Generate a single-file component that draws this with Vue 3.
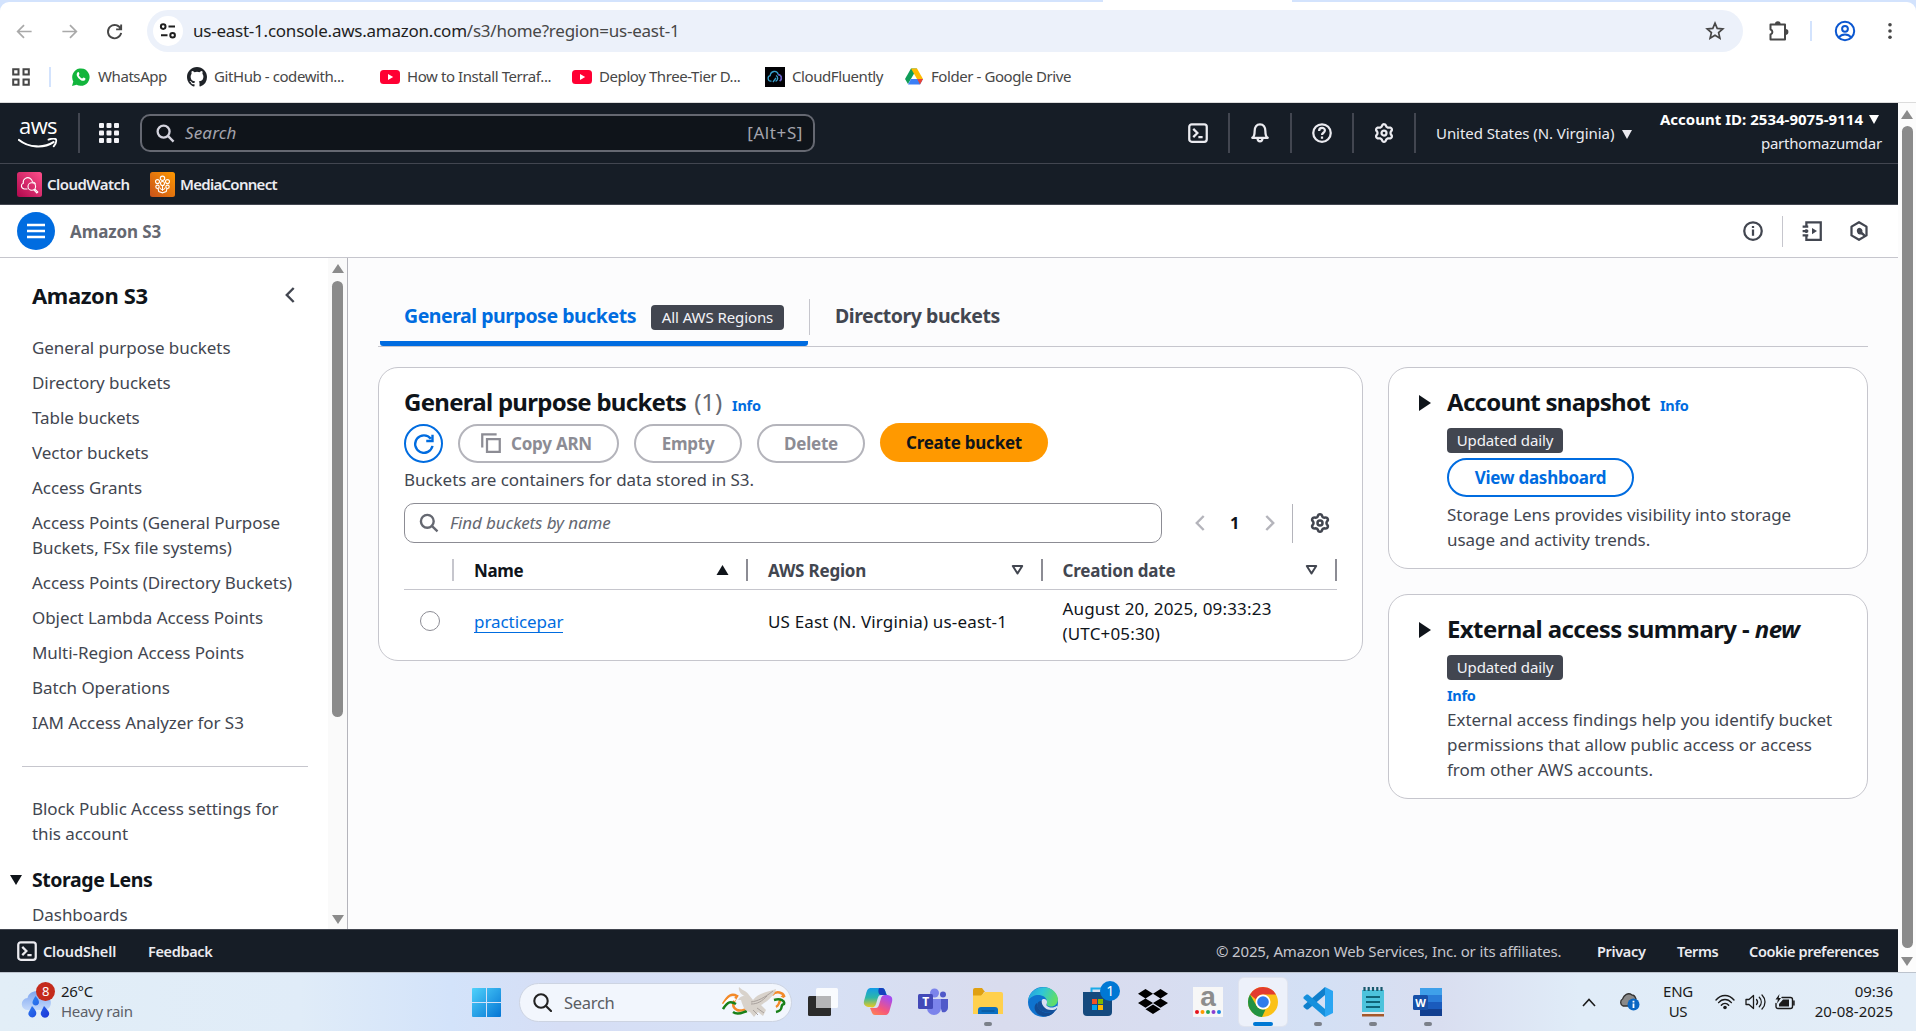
<script setup>
const bookmarks = [
  { kind: 'whatsapp', label: 'WhatsApp', width: 116 },
  { kind: 'github', label: 'GitHub - codewith...', width: 193 },
  { kind: 'youtube', label: 'How to Install Terraf...', width: 192 },
  { kind: 'youtube', label: 'Deploy Three-Tier D...', width: 193 },
  { kind: 'fluently', label: 'CloudFluently', width: 139 },
  { kind: 'drive', label: 'Folder - Google Drive', width: 180 }
]

const navLinks = [
  'General purpose buckets',
  'Directory buckets',
  'Table buckets',
  'Vector buckets',
  'Access Grants',
  ['Access Points (General Purpose', 'Buckets, FSx file systems)'],
  'Access Points (Directory Buckets)',
  'Object Lambda Access Points',
  'Multi-Region Access Points',
  'Batch Operations',
  'IAM Access Analyzer for S3'
].map((l) => [].concat(l))

// Six-lobed gear outline on a 16-unit grid
function gearPath() {
  const pts = []
  for (let i = 0; i < 72; i++) {
    const a = (i / 72) * Math.PI * 2 - Math.PI / 2
    const c = Math.cos(6 * (a + Math.PI / 2))
    const r = 6.1 + 0.9 * Math.sign(c) * Math.pow(Math.abs(c), 0.6)
    pts.push((8 + r * Math.cos(a)).toFixed(2) + ' ' + (8 + r * Math.sin(a)).toFixed(2))
  }
  return 'M' + pts.join('L') + 'Z'
}
const gear = gearPath()
</script>

<template>
  <div class="screen">
    <!-- Browser chrome -->
    <header class="browser">
      <div class="tabstrip"><span class="open-tab"></span></div>
      <div class="toolbar">
        <svg class="nav back" viewBox="0 0 20 20"><path d="M17.5 10H3M9.5 3.2L2.8 10l6.7 6.8" /></svg>
        <svg class="nav fwd" viewBox="0 0 20 20"><path d="M2.5 10H17M10.5 3.2l6.7 6.8-6.7 6.8" /></svg>
        <svg class="nav reload" viewBox="0 0 20 20"><path d="M16.6 7.5A7 7 0 1 0 17 11.5M17 2.5v5.3h-5.3" /></svg>
        <div class="omnibox">
          <span class="site">
            <svg viewBox="0 0 18 18" width="18" height="18"><g fill="none" stroke="#1f1f1f" stroke-width="2"><circle cx="4.2" cy="4.6" r="2.3" /><path d="M9.5 4.6H16M2 13.2h6.5" /><circle cx="13.6" cy="13.2" r="2.3" /></g></svg>
          </span>
          <span class="url">us-east-1.console.aws.amazon.com<i>/s3/home?region=us-east-1</i></span>
          <svg class="star" viewBox="0 0 20 20"><path d="M10 2.2l2.2 5.2 5.6.5-4.2 3.7 1.3 5.6-4.9-3-4.9 3 1.3-5.6-4.2-3.7 5.6-.5z" /></svg>
        </div>
        <svg class="puzzle" viewBox="0 0 22 22"><path d="M2.500 4.500H17v15H2.500v-5a2.600 2.600 0 0 0 0-5z" fill="none" stroke="#474747" stroke-width="2" stroke-linejoin="round" /><path d="M7 4a2.800 2.800 0 0 1 5.600 0zM17.600 9.100a2.800 2.800 0 0 1 0 5.600z" fill="#474747" /></svg>
        <span class="tsep"></span>
        <svg class="person" viewBox="0 0 22 22"><g fill="none" stroke="#0b57d0" stroke-width="2"><circle cx="11" cy="11" r="9.2" /><circle cx="11" cy="8.8" r="2.9" /><path d="M4.8 17.4c3-4 9.400-4 12.400 0" /></g></svg>
        <svg class="dots" viewBox="0 0 6 20"><circle cx="3" cy="3" r="2" /><circle cx="3" cy="10" r="2" /><circle cx="3" cy="17" r="2" /></svg>
      </div>
      <div class="bookmarks">
        <svg class="apps" viewBox="0 0 18 18"><path d="M1.200 1.200h5.300v5.300H1.200zM11.500 1.200h5.300v5.300h-5.300zM1.200 11.500h5.300v5.300H1.200zM11.500 11.500h5.300v5.300h-5.300z" fill="none" stroke="#474747" stroke-width="2" /></svg>
        <span class="bsep"></span>
        <div v-for="b in bookmarks" :key="b.label" class="bm" :style="{ width: b.width + 'px' }">
          <svg v-if="b.kind === 'whatsapp'" viewBox="0 0 20 20"><path d="M1 19l1.300-4.600A8.700 8.700 0 1 1 5.600 17.700z" fill="#12b53c" /><path d="M6.500 5.500c.8-.8 1.500-.3 1.900 1.300.2.800-.9 1.100-.5 1.800a7 7 0 0 0 3 2.900c.8.300 1.100-1.100 1.800-.9 1.800.7 2.200 1.100 1.500 2.100-1 1.500-2.700 1.400-4.300.6A9 9 0 0 1 6 9C5.500 7.500 5.700 6.300 6.500 5.500z" fill="#fff" /></svg>
          <svg v-else-if="b.kind === 'github'" viewBox="0 0 16 16"><path fill="#1f2328" d="M8 0C3.580 0 0 3.580 0 8c0 3.540 2.290 6.530 5.470 7.590.4.070.55-.17.55-.38 0-.19-.01-.82-.01-1.490-2.010.37-2.530-.49-2.690-.94-.09-.23-.48-.94-.82-1.130-.28-.15-.68-.52-.01-.53.63-.01 1.080.58 1.230.82.72 1.210 1.870.87 2.330.66.07-.52.28-.87.51-1.070-1.780-.2-3.640-.89-3.640-3.950 0-.87.31-1.590.82-2.150-.08-.2-.36-1.020.08-2.120 0 0 .67-.21 2.200.82a7.400 7.400 0 0 1 4 0c1.530-1.040 2.200-.82 2.200-.82.44 1.100.16 1.920.08 2.120.51.56.82 1.270.82 2.150 0 3.070-1.870 3.750-3.650 3.950.29.25.54.73.54 1.480 0 1.070-.01 1.930-.01 2.200 0 .21.15.46.55.38A8.010 8.010 0 0 0 16 8c0-4.420-3.580-8-8-8z" /></svg>
          <svg v-else-if="b.kind === 'youtube'" viewBox="0 0 20 20"><rect y="3" width="20" height="14" rx="3.500" fill="#ff0033" /><path d="M8 7l5.200 3L8 13z" fill="#fff" /></svg>
          <svg v-else-if="b.kind === 'fluently'" viewBox="0 0 20 20"><rect width="20" height="20" fill="#020205" /><path d="M6.500 14.200H5.800a2.800 2.800 0 0 1-.6-5.500C5.500 4 12 2.600 13.300 7.600c3.500.4 4.200 4.800 1.400 6.400M8 15l3-4.200M11 8.500c2.500 1.500 2.200 4.500-.4 5.800" fill="none" stroke="#38a0cc" stroke-width="1.300" /><path d="M13.300 7.600c3.500.4 4.200 4.800 1.400 6.400" fill="none" stroke="#7657c9" stroke-width="1.300" /></svg>
          <svg v-else viewBox="0 0 20 20"><path d="M7 1.500h6L7.200 11.600 4 17 1 12z" fill="#0f9d58" /><path d="M7 1.500h6l6 10.500h-6z" fill="#ffba00" /><path d="M4 17.500L7 12h12l-3 5.500z" fill="#3c7ff5" /><path d="M13.200 12H19l-3 5.500z" fill="#ea4335" /></svg>
          <span>{{ b.label }}</span>
        </div>
      </div>
    </header>

    <div class="viewport">
      <div class="console">
        <!-- AWS global navigation -->
        <div class="topnav">
          <div class="aws"><span>aws</span><svg viewBox="0 0 40 11"><path d="M1 2c10 8 25 8.500 34.500 2.200" fill="none" stroke="#fff" stroke-width="2.200" stroke-linecap="round" /><path d="M30.500 1.600c3-1 6.500-1.300 7.500-.2.600 1.800-.6 5-2.300 7" fill="none" stroke="#fff" stroke-width="1.800" stroke-linecap="round" /></svg></div>
          <span class="nsep first"></span>
          <svg class="waffle" viewBox="0 0 20 20"><g v-for="r in 3" :key="r"><rect v-for="c in 3" :key="c" :x="(c - 1) * 7.500" :y="(r - 1) * 7.500" width="5" height="5" rx="1" fill="#f3f3f7" /></g></svg>
          <div class="gsearch">
            <svg viewBox="0 0 20 20"><g fill="none" stroke="#d4d4de" stroke-width="2.400"><circle cx="8" cy="8" r="6.300" /><path d="M12.500 12.500l6 6" /></g></svg>
            <em>Search</em><span>[Alt+S]</span>
          </div>
          <div class="nicon term"><svg viewBox="0 0 16 16"><rect x="1" y="1" width="14" height="14" rx="2" /><path d="M4.200 4.700L7.500 8l-3.300 3.300M8.300 11.300h3.400" /></svg></div>
          <div class="nicon"><svg viewBox="0 0 16 16"><path d="M1.800 11.800c1.700-1 1.900-2.300 1.900-5.300C3.700 3.300 5.300 1 8 1s4.300 2.300 4.300 5.500c0 3 .2 4.300 1.900 5.300zM6 12.500c.3 2.800 3.700 2.800 4 0" stroke-linejoin="round" /></svg></div>
          <div class="nicon"><svg viewBox="0 0 16 16"><circle cx="8" cy="8" r="7" /><path d="M5.700 6.300C5.700 3 10.400 3.200 10.300 6c0 1.800-2.300 1.800-2.300 3.600M8 10.800v1.700" /></svg></div>
          <div class="nicon"><svg viewBox="0 0 16 16"><path :d="gear" /><circle cx="8" cy="8" r="2" /></svg></div>
          <div class="region">United States (N. Virginia)<b class="tri"></b></div>
          <div class="account"><strong>Account ID: 2534-9075-9114<b class="tri"></b></strong><span>parthomazumdar</span></div>
        </div>
        <div class="favs">
          <svg class="fav" viewBox="0 0 25 25"><defs><linearGradient id="cw" x1="0" y1="1" x2="1" y2="0"><stop stop-color="#b0084d" /><stop offset="1" stop-color="#ff4f8b" /></linearGradient></defs><rect width="25" height="25" rx="2.500" fill="url(#cw)" /><g fill="none" stroke="#fff" stroke-width="1.100"><path d="M10.500 17H7.200C3.500 16 3.800 12 6.300 11.300c-.8-4.500 4-7 7-4.800 1.700 1.200 2 2.500 2.200 3.500 2 0 2.700.8 3.200 2.300" /><circle cx="14.800" cy="14.500" r="3.800" /><path d="M17.700 17l3.100 2.900-1 1-3.200-3.200" /></g></svg>
          <span class="cwl">CloudWatch</span>
          <svg class="fav" viewBox="0 0 25 25"><defs><linearGradient id="mc" x1="0" y1="1" x2="1" y2="0"><stop stop-color="#c8511b" /><stop offset="1" stop-color="#ff9900" /></linearGradient></defs><rect width="25" height="25" rx="2.500" fill="url(#mc)" /><g fill="none" stroke="#fff" stroke-width="1.100"><circle cx="12.500" cy="6.300" r="2.200" /><circle cx="7.500" cy="9.600" r="2" /><circle cx="17.500" cy="9.600" r="2" /><circle cx="12.500" cy="11.500" r="2" /><circle cx="7.500" cy="14.800" r="1.700" /><circle cx="17.500" cy="14.800" r="1.700" /><path d="M12.500 13.500v5.500M9.800 15.500c.2 1.500 1.200 2 2.700 2.200M15.200 15.500c-.2 1.500-1.200 2-2.700 2.200M8 16.500l.8 3 3.700 1.300 3.700-1.300.8-3" /></g></svg>
          <span>MediaConnect</span>
        </div>
        <!-- Service bar -->
        <div class="servicebar">
          <span class="burger"><svg viewBox="0 0 18 16"><path d="M0 2h18M0 8h18M0 14h18" stroke="#fff" stroke-width="2.300" /></svg></span>
          <strong>Amazon S3</strong>
          <svg class="sicon" viewBox="0 0 16 16"><circle cx="8" cy="8" r="7" /><path d="M8 6.700v5M8 4v1.600" /></svg>
          <span class="ssep"></span>
          <svg class="sicon note" viewBox="0 0 16 16"><path d="M3.500 4V1H15v14H3.500v-3M3.500 6.500v3M.5 4.500h4.500M.5 8h4.500M.5 11.500h4.500" /><path d="M8 5.500v5L12 8z" fill="#424650" stroke="none" /></svg>
          <svg class="sicon hex" viewBox="0 0 16 16"><path d="M8 1l6 3.500v7L8 15l-6-3.500v-7z" stroke-linejoin="round" /><path d="M8.300 5.400a2.700 2.700 0 0 1 2.400 3.400l2.800 2.500-1 1.300-2.700-1.900A2.700 2.700 0 1 1 8.300 5.400z" fill="#424650" stroke="none" /></svg>
        </div>

        <div class="body">
          <nav class="side">
            <div class="side-in">
              <div class="side-title"><h3>Amazon S3</h3><svg viewBox="0 0 10 16"><path d="M8.700 1L1.800 8l6.900 7" fill="none" stroke="#424650" stroke-width="2.400" /></svg></div>
              <a v-for="(l, i) in navLinks" :key="i"><span v-for="t in l" :key="t">{{ t }}</span></a>
              <hr />
              <a><span>Block Public Access settings for</span><span>this account</span></a>
              <h4><b class="tri"></b>Storage Lens</h4>
              <a><span>Dashboards</span></a>
            </div>
            <div class="bar inner"><b class="up"></b><i></i><b class="down"></b></div>
          </nav>

          <main>
            <div class="tabs">
              <div class="tab active">General purpose buckets<span class="badge">All AWS Regions</span></div>
              <span class="tabsep"></span>
              <div class="tab second">Directory buckets</div>
            </div>
            <div class="cols">
              <section class="card buckets">
                <div class="head"><h2>General purpose buckets</h2><span class="count">(1)</span><b class="info">Info</b></div>
                <div class="actions">
                  <span class="btn refresh"><svg viewBox="0 0 16 16"><path d="M14.800 9.500A7 7 0 1 1 13.500 3.800M14.800.6v5H9.800" fill="none" stroke="#006ce0" stroke-width="1.900" /></svg></span>
                  <span class="btn off copy"><svg viewBox="0 0 16 16"><path d="M1 11.500V1h11.500M4.800 4.800H15V15H4.800z" fill="none" stroke="#8c8c94" stroke-width="1.800" /></svg>Copy ARN</span>
                  <span class="btn off">Empty</span>
                  <span class="btn off">Delete</span>
                  <span class="btn primary">Create bucket</span>
                </div>
                <p class="desc">Buckets are containers for data stored in S3.</p>
                <div class="filter">
                  <div class="find"><svg viewBox="0 0 20 20"><g fill="none" stroke="#656871" stroke-width="2.400"><circle cx="8.300" cy="8.300" r="6.400" /><path d="M12.800 12.800l5.700 5.500" /></g></svg><em>Find buckets by name</em></div>
                  <svg class="chev" viewBox="0 0 10 16"><path d="M8.700 1L1.800 8l6.900 7" /></svg>
                  <b class="pg">1</b>
                  <svg class="chev" viewBox="0 0 10 16"><path d="M1.300 1l6.900 7-6.900 7" /></svg>
                  <span class="fsep"></span>
                  <svg class="cog" viewBox="0 0 16 16"><path :d="gear" /><circle cx="8" cy="8" r="2" /></svg>
                </div>
                <div class="row thead">
                  <div class="c0"></div>
                  <div class="c1">Name<svg viewBox="0 0 12 10"><path d="M6 0l6 10H0z" fill="#0f141a" /></svg></div>
                  <div class="c2">AWS Region<svg viewBox="0 0 12 10"><path d="M1.300 1h9.400L6 8.500z" fill="none" stroke="#424650" stroke-width="2" stroke-linejoin="round" /></svg></div>
                  <div class="c2">Creation date<svg viewBox="0 0 12 10"><path d="M1.300 1h9.400L6 8.500z" fill="none" stroke="#424650" stroke-width="2" stroke-linejoin="round" /></svg></div>
                </div>
                <div class="row data">
                  <div class="c0"><span class="radio"></span></div>
                  <div class="c1"><a>practicepar</a></div>
                  <div class="c2">US East (N. Virginia) us-east-1</div>
                  <div class="c2">August 20, 2025, 09:33:23<br />(UTC+05:30)</div>
                </div>
              </section>

              <aside>
                <section class="card snap">
                  <b class="exp"></b>
                  <div class="head"><h2>Account snapshot</h2><b class="info">Info</b></div>
                  <span class="badge">Updated daily</span>
                  <span class="btn link">View dashboard</span>
                  <p>Storage Lens provides visibility into storage<br />usage and activity trends.</p>
                </section>
                <section class="card ext">
                  <b class="exp"></b>
                  <div class="head"><h2>External access summary - <em>new</em></h2></div>
                  <span class="badge">Updated daily</span>
                  <b class="info block">Info</b>
                  <p>External access findings help you identify bucket<br />permissions that allow public access or access<br />from other AWS accounts.</p>
                </section>
              </aside>
            </div>
          </main>
        </div>

        <footer class="foot">
          <svg viewBox="0 0 16 16"><rect x="1" y="1" width="14" height="14" rx="2" /><path d="M4.200 4.700L7.500 8l-3.300 3.300M8.300 11.300h3.400" /></svg>
          <b class="f1">CloudShell</b><b>Feedback</b>
          <span class="copyr">© 2025, Amazon Web Services, Inc. or its affiliates.</span>
          <b class="f2">Privacy</b><b class="f3">Terms</b><b class="f4">Cookie preferences</b>
        </footer>
      </div>
      <div class="bar outer"><b class="up"></b><i></i><b class="down"></b></div>
    </div>

    <!-- Windows taskbar -->
    <div class="taskbar">
      <div class="weather">
        <svg viewBox="0 0 32 38"><defs><linearGradient id="cl" x1="0" y1="0" x2="0" y2="1"><stop stop-color="#7fa6f0" /><stop offset="1" stop-color="#c3d9fb" /></linearGradient><linearGradient id="dr" x1="0" y1="0" x2="1" y2="1"><stop stop-color="#2f8df5" /><stop offset="1" stop-color="#1b35d8" /></linearGradient></defs><path d="M7 28a6 6 0 0 1-.5-12C8 8 20 7 23 14c9 0 9 13 1 14z" fill="url(#cl)" /><path d="M11 24c4 4.500 5 6.500 4 9a4 4 0 0 1-7.400 0c-.8-2.500 1-4 3.400-9zM23 24c4 4.500 6 6.500 5 9a4.300 4.300 0 0 1-8 0c-.8-2.500.6-4 3-9zM14.500 14c3 3.500 4 5.500 3.300 7.500a3.400 3.400 0 0 1-6.200 0c-.6-2 .9-4 2.900-7.500z" fill="url(#dr)" /></svg>
        <span class="wbadge">8</span>
        <div><span>26°C</span><span class="dim">Heavy rain</span></div>
      </div>
      <svg class="win" viewBox="0 0 29 29"><defs><linearGradient id="wn" x1="0" y1="0" x2="1" y2="1"><stop stop-color="#4fd2fb" /><stop offset="1" stop-color="#0474d4" /></linearGradient></defs><path d="M1 0h13v14H0V1a1 1 0 0 1 1-1zM15 0h13a1 1 0 0 1 1 1v13H15zM0 15h14v14H1a1 1 0 0 1-1-1zM15 15h14v13a1 1 0 0 1-1 1H15z" fill="url(#wn)" /></svg>
      <div class="tsearch">
        <svg class="mag" viewBox="0 0 19 19"><g fill="none" stroke="#222" stroke-width="2.100"><circle cx="8" cy="8" r="6.700" /><path d="M13 13l5 5" stroke-linecap="round" /></g></svg>
        <span>Search</span>
        <svg class="dove" viewBox="0 0 64 32"><g fill="none" stroke-width="2.500"><path d="M1 18c5-9 9-11 14-8-4 6-6 11 0 14 5 2 9-2 12-1" stroke="#f38a2a" /><path d="M1 20.500c5-8 8-9 12.500-6.500" stroke="#fff" /><path d="M1 23c5-8 8-8 13-5M11 26c5 4 10 0 14-1" stroke="#198019" /><path d="M50 9c5-5 11-2 12 1-7 3-2 8-8 11" stroke="#f38a2a" /><path d="M50 13c5-3 11-1 12 2-5 3-2 7-8 9" stroke="#f4f4f4" /><path d="M52 14c7-2 11 1 10 4-5 1 1 6-8 8" stroke="#198019" /></g><path d="M16 14c2-4 6-5 9-3C19 9 16 5 17 1c4 4 8 4 10 8l4 5c5-7 14-8 23-11-1 6-8 12-15 16l5 5-3 6-5-4-4 5-4-5c-6 0-8-9-9-12z" fill="#d8d2cb" /><path d="M29 16c7-1 13-4 22-11M29 18c7 0 11-3 16-8M31 24l5 5M35 22l7 5" stroke="#a9a19d" fill="none" /></svg>
      </div>
      <div class="apps-row">
        <div class="app"><svg viewBox="0 0 30 30"><rect y="9" width="23" height="20" rx="1.500" fill="#2b2b2b" /><rect x="8" y="1" width="22" height="20" rx="1.500" fill="#fff" opacity=".85" /><path d="M8 9h15v12H8z" fill="#b5b5b7" /></svg></div>
        <div class="app"><svg viewBox="0 0 30 30"><defs><linearGradient id="ca" x1="0" y1="0" x2="0" y2="1"><stop stop-color="#129be8" /><stop offset=".5" stop-color="#2db7a8" /><stop offset="1" stop-color="#f0c91c" /></linearGradient><linearGradient id="cb" x1="0" y1="1" x2=".6" y2="0"><stop stop-color="#ff8a4c" /><stop offset=".45" stop-color="#f5567d" /><stop offset="1" stop-color="#a64cf0" /></linearGradient></defs><path d="M8 1h11c3 0 3 3 5 7h-6c-3 0-3 3-5 9-1 3-3 4-6 3-4 0-7-2-6-6L3 7c1-4 2-6 5-6z" fill="url(#ca)" /><path d="M16 1h3c3 0 3 3 4.500 7H18c-3 0-3-5-2-7z" fill="#1740bd" /><path d="M22 28H12c-3 0-3-3-5-7h6c3 0 3-4 4.500-8 1-4 2-5 5.500-5 5 0 7 2 6 7l-2 7c-1 4-2 6-5 6z" fill="url(#cb)" /></svg></div>
        <div class="app"><svg viewBox="0 0 30 30"><circle cx="16.500" cy="6" r="4.500" fill="#7b83eb" /><circle cx="25" cy="7.500" r="3" fill="#5059c9" /><path d="M20 12h10v8c0 4-3 6-6 5z" fill="#5059c9" /><path d="M9 12h14v9a7 7 0 0 1-14 0z" fill="#7b83eb" /><rect y="7" width="15" height="15" rx="1.500" fill="#4349b8" /><text x="7.500" y="18.500" font-size="12" font-weight="700" fill="#fff" text-anchor="middle">T</text></svg></div>
        <div class="app run"><svg viewBox="0 0 30 30"><path d="M0 3a2 2 0 0 1 2-2h7l3 4h-1l-3 5H0z" fill="#e0a010" /><path d="M0 8.500h8L12 5h16a2 2 0 0 1 2 2v20H0z" fill="#ffd04d" /><path d="M5 27v-4a3 3 0 0 1 3-3h14a3 3 0 0 1 3 3v4z" fill="#0b6fc2" /><path d="M8.500 24h13" stroke="#084f8c" /></svg></div>
        <div class="app"><svg viewBox="0 0 30 30"><defs><linearGradient id="ed" x1="0" y1="0" x2="1" y2=".3"><stop stop-color="#2399e0" /><stop offset=".5" stop-color="#2fc5d8" /><stop offset="1" stop-color="#5fdd6b" /></linearGradient></defs><circle cx="15" cy="15" r="15" fill="#0f73cf" /><path d="M0 14C2-4 28-4 30 12c0 6-5 9-10 7-2-1-1-2-1-5-1-7-14-9-19 0z" fill="url(#ed)" /><path d="M9 16c0 8 8 12 18 8-4 7-15 7-19 1-2-3-2-7 1-9z" fill="#124b93" /><path d="M18.500 19.500c-3-2-2-5-5-5.500s-5 2.500-4 6c2 5 10 7 17.500 4 2-1 3-4 1-3-3 1-7 1-9.500-1.500z" fill="#144f99" /><path d="M15 12c2.500-.5 4.300 1 4 3.500-.3 2-1.300 2.500.3 3.800 2.500 1.700 7 1.700 9.700-.6l.6.800c-.7 1.500-1.500 2.500-2.500 3-5 1.300-9 .3-11.500-3-2.300-3-2.500-6.800-.6-7.500z" fill="#d9dff2" /></svg></div>
        <div class="app"><svg viewBox="0 0 30 30"><path d="M8.500 6V1.500h12V6" fill="none" stroke="#1cabe8" stroke-width="2" /><path d="M0 5h29v20a4 4 0 0 1-4 4H4a4 4 0 0 1-4-4z" fill="#154a7e" /><path d="M9 12h5v5H9z" fill="#f25022" /><path d="M15 12h5v5h-5z" fill="#7fba00" /><path d="M9 18h5v5H9z" fill="#00a4ef" /><path d="M15 18h5v5h-5z" fill="#ffb900" /></svg><span class="count1">1</span></div>
        <div class="app"><svg viewBox="0 0 30 30"><path d="M7.500 2L15 6.700l-7.500 4.700L0 6.700zM22.500 2L30 6.700l-7.500 4.700L15 6.700zM0 16l7.500-4.600L15 16l-7.500 4.800zM22.500 11.400L30 16l-7.500 4.800L15 16zM7.500 22.300L15 17.600l7.500 4.700L15 27z" fill="#000" /></svg></div>
        <div class="app"><svg viewBox="0 0 30 30"><rect width="30" height="30" fill="#f7f7f7" /><text x="15" y="19" font-size="28" font-weight="700" fill="#8d8d8d" text-anchor="middle" class="az">a</text><circle cx="4" cy="25" r="2" fill="#e5131d" /><circle cx="9.500" cy="25" r="2" fill="#ff9900" /><circle cx="15" cy="25" r="2" fill="#23a455" /><circle cx="20.500" cy="25" r="2" fill="#8a3fd1" /><circle cx="26" cy="25" r="2" fill="#1b87e0" /></svg></div>
        <div class="app current"><svg viewBox="0 0 30 30"><circle cx="15" cy="15" r="15" fill="#fbc116" /><path d="M2 7.500a15 15 0 0 1 26 0H15a7.500 7.500 0 0 0-7 5z" fill="#e33b2e" /><path d="M2 7.500l6.500 11.200A7.500 7.500 0 0 0 15 22.500l2.500 0L14 30A15 15 0 0 1 2 7.500z" fill="#229342" /><circle cx="15" cy="15" r="7.500" fill="#fff" /><circle cx="15" cy="15" r="5.800" fill="#2f7bec" /></svg></div>
        <div class="app run"><svg viewBox="0 0 30 30"><path d="M22 0l8 4v22l-8 4z" fill="#2aa5f2" /><path d="M22 0v8L5 22.500l-1.500 0L.5 20v-1.500z" fill="#0f7fcc" /><path d="M22 30v-8L5 7.500H3.500L.5 10v1.500z" fill="#1590dd" /></svg></div>
        <div class="app run"><svg viewBox="0 0 30 30"><path d="M4 3h22v25H4z" fill="#4cc3dc" /><path d="M4 26.500h22v3H4z" fill="#a5582a" /><path d="M4 25h22v2H4z" fill="#e9e9e9" /><path d="M8 10h14M8 15h14M8 20h14" stroke="#0f6478" stroke-width="1.800" /><path d="M6.500 0v4M10.700 0v4M15 0v4M19.300 0v4M23.500 0v4" stroke="#17586c" stroke-width="2.200" /></svg></div>
        <div class="app run"><svg viewBox="0 0 30 30"><path d="M7 1h22v8H7z" fill="#3fa0ea" /><path d="M7 8h22v7H7z" fill="#2a7cd8" /><path d="M7 15h22v7H7z" fill="#1a5bbd" /><path d="M7 22h22v7H7z" fill="#123f90" /><rect y="8" width="15" height="15" rx="1.500" fill="#1650a8" /><text x="7.500" y="19.500" font-size="11" font-weight="700" fill="#fff" text-anchor="middle">W</text></svg></div>
      </div>
      <div class="tray">
        <svg class="caret" viewBox="0 0 14 9"><path d="M1 8l6-6.500L13 8" fill="none" stroke="#1b1b1b" stroke-width="1.600" /></svg>
        <svg class="drive" viewBox="0 0 21 20"><path d="M4 14a4 4 0 0 1-.5-7C5 3 9 0 13 3c2 0 3 1 4 4l-6 7z" fill="#8a8a8a" stroke="#333" stroke-width="1.300" /><circle cx="14.500" cy="12.500" r="6" fill="#0a67c4" /><path d="M14.500 11.500v4.500M14.500 8.800v1.600" stroke="#fff" stroke-width="1.800" /></svg>
        <div class="two lang"><span>ENG</span><span>US</span></div>
        <svg class="wifi" viewBox="0 0 20 16"><g fill="none" stroke="#1b1b1b" stroke-width="1.400" stroke-linecap="round"><path d="M1 6c5-6 13-6 18 0M3.600 8.600c3.600-4.200 9.200-4.200 12.800 0M6.300 11.200c2-2.500 5.400-2.500 7.400 0" /></g><circle cx="10" cy="13.500" r="1.800" fill="#1b1b1b" /></svg>
        <svg class="snd" viewBox="0 0 21 16"><g fill="none" stroke="#1b1b1b" stroke-width="1.300" stroke-linecap="round" stroke-linejoin="round"><path d="M1 5.500h3L8.500 1.500v13L4 10.500H1zM11.500 5.500c1.300 1.500 1.300 3.500 0 5M14.300 3.300c2.600 2.800 2.600 6.600 0 9.400M17 1c4 4 4 10 0 14" /></g></svg>
        <svg class="bat" viewBox="0 0 21 16"><path d="M7 3.500h8.500a2 2 0 0 1 2 2v7a2 2 0 0 1-2 2H3a2 2 0 0 1-2-2V9.500M19 7v4" fill="none" stroke="#1b1b1b" stroke-width="1.400" stroke-linecap="round" /><path d="M8 5.500h6v7H4V10z" fill="#1b1b1b" /><path d="M4.500 0L.5 5.500h2.400L2 9.500l4-5.500H3.700z" fill="#1b1b1b" /></svg>
        <div class="two time"><span>09:36</span><span>20-08-2025</span></div>
      </div>
    </div>
  </div>
</template>

<style>
body { margin: 0; overflow: hidden; }
</style>

<style scoped>
* { box-sizing: border-box; }
.screen { width: 1916px; height: 1031px; display: flex; flex-direction: column; overflow: hidden; font-family: "Noto Sans", "Open Sans", sans-serif; font-size: 17px; letter-spacing: -0.005em; color: #0f141a; background: #fff; }
svg { display: block; flex: none; }
h2, h3, h4, p { margin: 0; }

.browser { height: 103px; flex: none; border-bottom: 1px solid #dcdcdc; background: linear-gradient(#d3e3fd 12px, #fff 12px); }
.tabstrip { height: 2px; padding-left: 1103px; }
.open-tab { display: block; width: 189px; height: 2px; background: #fff; }
.toolbar { height: 58px; display: flex; align-items: center; background: #fff; border-radius: 9px 9px 0 0; }
.nav { width: 19px; height: 19px; fill: none; stroke: #a9a9a9; stroke-width: 1.8; }
.back { margin-left: 15px; }
.fwd { margin-left: 26px; }
.reload { margin: 0 23px 0 26px; stroke: #474747; stroke-width: 2; }
.omnibox { width: 1596px; height: 42px; border-radius: 21px; background: #ecf1fa; display: flex; align-items: center; padding-left: 6px; }
.site { width: 30px; height: 30px; border-radius: 50%; background: #fff; display: flex; align-items: center; justify-content: center; }
.url { margin-left: 10px; margin-bottom: 1px; font-size: 17px; letter-spacing: -0.014em; color: #1f1f1f; white-space: nowrap; }
.url i { font-style: normal; color: #474747; }
.star { width: 20px; height: 20px; margin-left: auto; margin-right: 18px; fill: none; stroke: #474747; stroke-width: 1.700; }
.puzzle { width: 22px; height: 22px; margin-left: 25px; }
.tsep { width: 2px; height: 20px; background: #d3e3fd; margin-left: 20px; }
.person { width: 22px; height: 22px; margin-left: 22px; }
.dots { width: 6px; height: 18px; margin-left: 31px; fill: #474747; }
.bookmarks { height: 34px; display: flex; align-items: center; font-size: 15px; color: #474747; }
.apps { width: 18px; height: 18px; margin-left: 12px; }
.bsep { width: 2px; height: 20px; background: #d3e3fd; margin: 0 20px 0 19px; }
.bm { display: flex; align-items: center; gap: 7px; white-space: nowrap; letter-spacing: -0.028em; }
.bm span { margin-bottom: 2px; }
.bm svg { width: 20px; height: 20px; }

.viewport { height: 869px; flex: none; display: flex; }
.console { width: 1898px; display: flex; flex-direction: column; }
.topnav { height: 61px; background: #161d26; border-bottom: 1px solid #424650; display: flex; align-items: center; color: #ebebf0; }
.aws { width: 40px; margin-left: 18px; display: flex; flex-direction: column; align-items: center; color: #fff; }
.aws span { font-family: "Open Sans", "Noto Sans", sans-serif; font-weight: 500; font-size: 22px; line-height: 15px; height: 19px; letter-spacing: -0.03em; }
.aws svg { width: 40px; height: 11px; margin-top: 1px; }
.nsep { width: 2px; height: 40px; background: #424650; }
.first { margin-left: 20px; }
.waffle { width: 20px; height: 20px; margin-left: 19px; }
.gsearch { width: 675px; height: 38px; margin-left: 21px; border: 2px solid #656871; border-radius: 10px; background: #0f141a; display: flex; align-items: center; padding: 0 10px 0 14px; color: #a4a4ad; }
.gsearch svg { width: 19px; height: 19px; margin-right: 10px; }
.gsearch em { letter-spacing: 0.008em; margin-bottom: 2px; }
.gsearch span { margin-left: auto; margin-bottom: 2px; letter-spacing: 0.035em; }
.nicon { width: 62px; height: 40px; border-right: 2px solid #424650; display: flex; align-items: center; justify-content: center; }
.nicon svg, .foot svg { width: 20px; height: 20px; fill: none; stroke: #ebebf0; stroke-width: 1.800; }
.nicon.term { margin-left: 353px; }
.tri { display: inline-block; width: 0; height: 0; border: 5px solid transparent; border-top: 9px solid currentColor; border-bottom: 0; }
.region { width: 224px; padding-left: 20px; font-size: 15px; white-space: nowrap; letter-spacing: -0.004em; }
.region .tri { margin-left: 8px; }
.account { width: 242px; font-size: 15px; line-height: 24px; display: flex; flex-direction: column; align-items: flex-end; white-space: nowrap; margin-top: -4px; }
.account strong { letter-spacing: 0.001em; color: #fff; margin-right: 3px; }
.account strong .tri { margin-left: 6px; margin-bottom: 1px; }
.account span { letter-spacing: -0.015em; }
.favs { height: 41px; background: #161d26; border-bottom: 1px solid #424650; display: flex; align-items: center; color: #ebebf0; font-size: 15px; font-weight: 600; letter-spacing: -0.048em; padding-left: 17px; }
.fav { width: 25px; height: 25px; margin-right: 5px; }
.cwl { width: 103px; letter-spacing: -0.036em; }
.servicebar { height: 53px; background: #fff; border-bottom: 1px solid #c6c6cd; display: flex; align-items: center; padding-left: 17px; }
.burger { width: 38px; height: 38px; border-radius: 50%; background: #006ce0; display: flex; align-items: center; justify-content: center; }
.burger svg { width: 18px; height: 16px; }
.servicebar strong { margin-left: 15px; color: #656871; letter-spacing: -0.006em; }
.sicon { width: 20px; height: 20px; margin-left: auto; fill: none; stroke: #424650; stroke-width: 1.800; }
.ssep { width: 1px; height: 31px; background: #c6c6cd; margin-left: 19px; }
.sicon.note { margin-left: 19px; }
.sicon.hex { margin: 0 29px 0 27px; }

.body { height: 671px; display: flex; overflow: hidden; }
.side { width: 348px; border-right: 1px solid #b4b4bb; display: flex; background: #fff; }
.side-in { width: 328px; padding-left: 32px; color: #424650; line-height: 25px; letter-spacing: -0.004em; }
.side-title { display: flex; justify-content: space-between; align-items: center; padding: 21px 33px 0 0; height: 53px; margin-bottom: 24px; }
.side-title h3 { color: #0f141a; font-size: 22px; letter-spacing: -0.018em; }
.side-title svg { width: 10px; height: 16px; margin-bottom: 1px; }
.side a { display: block; margin-bottom: 10px; white-space: nowrap; }
.side a span { display: block; }
.side hr { width: 286px; margin: 31px 0 29px -10px; border: 0; border-top: 1px solid #c6c6cd; }
.side h4 { color: #0f141a; font-size: 19.500px; letter-spacing: -0.022em; margin: 21px 0 10px -22px; display: flex; align-items: center; }
.side h4 .tri { border-width: 10px 6px 0; margin-right: 10px; }

.bar { display: flex; flex-direction: column; align-items: center; background: #fafafa; }
.bar b { width: 0; height: 0; border: 6px solid transparent; }
.bar .up { border-top: 0; border-bottom: 9px solid #8b8b8b; }
.bar .down { border-bottom: 0; border-top: 9px solid #8b8b8b; }
.bar i { width: 11px; border-radius: 6px; background: #8b8b8b; }
.inner { width: 19px; padding-top: 6px; }
.inner i { height: 436px; margin-top: 8px; }
.inner .down { margin-top: 198px; }
.outer { width: 18px; padding-top: 7px; background: #fcfcfc; }
.outer i { height: 822px; margin-top: 7px; }
.outer .down { margin-top: 9px; }

main { width: 1550px; background: #fcfcfd; padding: 41px 30px 0 30px; }
.tabs { height: 48px; border-bottom: 1px solid #c6c6cd; display: flex; font-size: 19.500px; font-weight: 700; letter-spacing: -0.024em; color: #424650; }
.tab { white-space: nowrap; line-height: 34px; }
.tab.active { width: 428px; margin-left: 2px; height: 47px; padding-left: 24px; color: #006ce0; border-bottom: 5px solid #006ce0; border-radius: 0 0 3px 3px; display: flex; justify-content: space-between; padding-right: 24px; }
.tab.second { padding-left: 25px; }
.tabsep { width: 1px; height: 36px; background: #c6c6cd; margin-left: 1px; }
.badge { display: block; height: 25px; border-radius: 4px; background: #424650; color: #f3f3f7; font-size: 15px; font-weight: 400; line-height: 24px; letter-spacing: -0.006em; text-align: center; white-space: nowrap; }
.tab .badge { width: 133px; margin-top: 6px; }

.cols { display: flex; justify-content: space-between; margin-top: 20px; align-items: flex-start; }
.card { background: #fff; border: 1px solid #c6c6cd; border-radius: 20px; }
.buckets { width: 985px; height: 294px; padding: 16px 25px 0; }
h2 { font-size: 24px; font-weight: 700; letter-spacing: -0.030em; line-height: 36px; }
.head { display: flex; align-items: baseline; white-space: nowrap; }
.info { color: #006ce0; font-size: 14.500px; letter-spacing: -0.02em; }
.head .info { margin-left: 10px; }
.count { font-size: 24px; line-height: 36px; color: #656871; margin-left: 8px; }
.actions { display: flex; margin-top: 4px; }
.btn { display: flex; align-items: center; justify-content: center; height: 39px; border-radius: 20px; border: 2px solid #006ce0; color: #006ce0; font-weight: 700; letter-spacing: -0.014em; white-space: nowrap; padding-bottom: 1px; }
.refresh { width: 39px; margin-right: 15px; padding: 0; }
.refresh svg, .copy svg { width: 20px; height: 20px; }
.off { width: 108px; margin-right: 15px; border-color: #b4b4bb; color: #8c8c94; }
.off.copy { width: 161px; padding: 0 4px 1px 0; }
.copy svg { margin-right: 10px; }
.primary { width: 168px; background: #ff9900; border: 0; color: #0f141a; margin-top: -1px; }
.desc { color: #424650; line-height: 25px; margin-top: 4px; letter-spacing: -0.003em; }
.filter { display: flex; align-items: center; margin-top: 11px; }
.find { width: 758px; height: 40px; border: 1px solid #8c8c94; border-radius: 10px; display: flex; align-items: center; padding: 0 0 1px 14px; color: #656871; letter-spacing: -0.006em; }
.find svg { width: 20px; height: 20px; margin-right: 11px; }
.chev { width: 10px; height: 16px; margin-left: 33px; fill: none; stroke: #b4b4bb; stroke-width: 2.400; }
.pg { width: 10px; margin-left: 25px; margin-bottom: 1px; font-size: 16.500px; }
.pg + .chev { margin-left: 25px; }
.fsep { width: 1px; height: 39px; background: #b4b4bb; margin-left: 17px; }
.cog { width: 20px; height: 20px; margin-left: 17px; fill: none; stroke: #424650; stroke-width: 2; }
.row { display: flex; align-items: center; width: 933px; }
.thead { height: 47px; padding-top: 14px; border-bottom: 1px solid #c6c6cd; font-weight: 700; color: #424650; letter-spacing: -0.012em; }
.thead > div { height: 22px; display: flex; align-items: center; justify-content: space-between; border-right: 2px solid #8c8c94; padding-right: 17px; margin-bottom: 6px; }
.thead .c0 { border-color: #c6c6cd; }
.thead .c1 { color: #0f141a; letter-spacing: -0.02em; }
.thead svg { width: 13px; height: 10px; }
.c0 { width: 50px; }
.c1 { width: 294px; padding-left: 20px; }
.c2 { width: 294.500px; padding-left: 20px; }
.data { height: 62px; line-height: 25px; white-space: nowrap; letter-spacing: 0.010em; }
.data a { color: #006ce0; border-bottom: 1px solid #006ce0; padding-bottom: 0; line-height: 21px; display: inline-block; letter-spacing: -0.004em; }
.radio { display: block; width: 20px; height: 20px; margin-left: 16px; border: 1.500px solid #8c8c94; border-radius: 50%; }

aside { width: 480px; display: flex; flex-direction: column; gap: 25px; }
aside .card { position: relative; padding: 16px 0 0 58px; }
.snap { height: 202px; }
.ext { height: 205px; }
.ext h2 { letter-spacing: -0.025em; }
.exp { position: absolute; left: 30px; top: 27px; border: 8px solid transparent; border-left: 12px solid #0f141a; border-right: 0; }
aside .badge { width: 116px; margin-top: 8px; }
aside p { color: #424650; line-height: 25px; white-space: nowrap; letter-spacing: -0.002em; }
.link { width: 187px; margin-top: 5px; margin-bottom: 5px; }
.info.block { display: block; line-height: 25px; padding-top: 3px; margin-bottom: -1px; }

.foot { height: 43px; border-top: 1px solid #424650; background: #161d26; color: #ebebf0; font-size: 14.500px; display: flex; align-items: center; padding: 0 0 1px 17px; letter-spacing: -0.02em; white-space: nowrap; }
.foot b { font-weight: 600; letter-spacing: -0.024em; }
.foot .f1 { width: 105px; margin-left: 6px; letter-spacing: -0.01em; }
.copyr { margin-left: auto; color: #c6c6cd; width: 343px; font-size: 15px; letter-spacing: -0.010em; }
.foot .f2 { width: 80px; margin-left: 38px; }
.foot .f3 { width: 72px; }
.foot .f4 { width: 149px; }

.taskbar { height: 59px; flex: none; display: flex; align-items: center; border-top: 1px solid #bcc3cd; background: linear-gradient(90deg, #e2eef7 0, #e0ecf8 300px, #d3e3fa 450px, #d6def5 560px, #d6e1f6 780px, #d9dcee 1000px, #d8ddf0 1160px, #d3e0f5 1310px, #d9def0 1440px, #e0ecf8 1580px, #e3edf7 1916px); color: #1b1b1b; font-size: 15px; letter-spacing: -0.02em; }
.weather { width: 472px; padding-left: 21px; display: flex; align-items: center; position: relative; line-height: 20px; }
.weather svg { width: 32px; height: 38px; margin: -2px 8px 0 0; }
.weather div { margin-top: -2px; }
.weather div span { display: block; }
.weather .dim { color: #5c6068; }
.wbadge { position: absolute; left: 36px; top: -1px; width: 19px; height: 19px; border-radius: 50%; background: #c42b1c; color: #fff; text-align: center; line-height: 19px; font-size: 13px; }
.win { width: 29px; height: 29px; }
.tsearch { width: 273px; height: 39px; margin-left: 18px; border-radius: 20px; background: #f2f6fd; border: 1px solid #cdd4e2; display: flex; align-items: center; color: #5a5d63; font-size: 16.500px; padding-left: 13px; }
.mag { width: 19px; height: 19px; margin-right: 12px; }
.dove { width: 64px; height: 32px; margin-left: auto; margin-right: 5px; }
.apps-row { display: flex; margin-left: 7px; gap: 7px; }
.app { width: 48px; height: 48px; border-radius: 5px; display: flex; align-items: center; justify-content: center; position: relative; }
.app svg { width: 30px; height: 30px; overflow: visible; }
.az { font-family: "Liberation Sans", sans-serif; }
.current { background: #edf1fa; box-shadow: 0 0 0 1px #e0e4ef; }
.run::after, .current::after { content: ""; position: absolute; bottom: 0; left: 20px; width: 8px; height: 4px; border-radius: 2px; background: #7b8089; }
.current::after { left: 14px; width: 20px; background: #0078d4; }
.count1 { position: absolute; left: 26px; top: 3px; width: 20px; height: 20px; border-radius: 50%; background: #0078d4; color: #fff; font-size: 14px; line-height: 20px; text-align: center; }
.tray { display: flex; align-items: center; margin-left: auto; margin-right: 23px; }
.two { line-height: 20px; display: flex; flex-direction: column; margin-top: -2px; }
.caret { width: 14px; height: 9px; margin-right: 23px; }
.drive { width: 21px; height: 20px; margin-right: 21px; }
.lang { width: 34px; align-items: center; margin-right: 20px; }
.wifi { width: 20px; height: 16px; }
.snd { width: 21px; height: 16px; margin-left: 10px; }
.bat { width: 21px; height: 16px; margin-left: 9px; }
.time { width: 97px; align-items: flex-end; letter-spacing: 0; }
</style>
